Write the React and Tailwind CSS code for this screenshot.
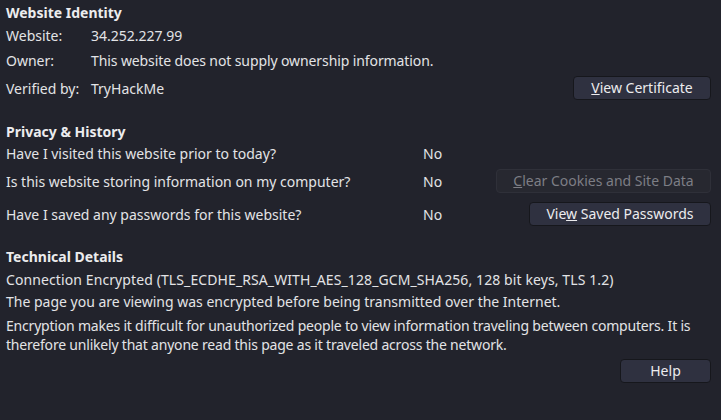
import React from 'react';

const Btn = ({ children, disabled, className = '' }) => (
    <button
        disabled={disabled}
        className={`h-[24px] rounded-[4px] border text-[14px] leading-none ${
            disabled
                ? 'border-[#2f3039] bg-[#272830] text-[#7d7e85]'
                : 'border-[#16171c] bg-[#2f3140] text-[#ececee]'
        } ${className}`}
    >
        {children}
    </button>
);

const Heading = ({ children, className = '' }) => (
    <div className={`text-[14px] font-bold text-[#ececee] leading-[19px] ${className}`}>{children}</div>
);

export default function App() {
    return (
        <div
            className="w-[721px] h-[420px] bg-[#22232c] text-[#e3e3e6] text-[14px] px-[6px] overflow-hidden"
            style={{ fontFamily: '"Noto Sans", "Open Sans", sans-serif' }}
        >
            {/* Website Identity */}
            <Heading className="pt-[3px]">Website Identity</Heading>
            <div className="flex items-center h-[24px] mt-[1px]">
                <span className="w-[85px]">Website:</span>
                <span>34.252.227.99</span>
            </div>
            <div className="flex items-center h-[24px] mt-[1px]">
                <span className="w-[85px]">Owner:</span>
                <span className="tracking-[-0.1px]">This website does not supply ownership information.</span>
            </div>
            <div className="flex items-center h-[28px] mt-[2px]">
                <span className="w-[85px]">Verified by:</span>
                <span className="flex-1">TryHackMe</span>
                <Btn className="w-[138px] mr-[4px]"><u>V</u>iew Certificate</Btn>
            </div>

            {/* Privacy & History */}
            <Heading className="mt-[20px]">Privacy &amp; History</Heading>
            <div className="flex items-center h-[24px]">
                <span className="w-[417px]">Have I visited this website prior to today?</span>
                <span>No</span>
            </div>
            <div className="flex items-center h-[26px] mt-[3px]">
                <span className="w-[417px]">Is this website storing information on my computer?</span>
                <span className="flex-1">No</span>
                <Btn disabled className="w-[215px] mr-[4px]"><u>C</u>lear Cookies and Site Data</Btn>
            </div>
            <div className="flex items-center h-[26px] mt-[7px]">
                <span className="w-[417px]">Have I saved any passwords for this website?</span>
                <span className="flex-1">No</span>
                <Btn className="w-[182px] mr-[4px]">Vie<u>w</u> Saved Passwords</Btn>
            </div>

            {/* Technical Details */}
            <Heading className="mt-[20px]">Technical Details</Heading>
            <div className="leading-[19px] mt-[4px] tracking-[0.1px]">
                Connection Encrypted (TLS_ECDHE_RSA_WITH_AES_128_GCM_SHA256, 128 bit keys, TLS 1.2)
            </div>
            <div className="leading-[19px] mt-[3px]">
                The page you are viewing was encrypted before being transmitted over the Internet.
            </div>
            <div className="leading-[19px] mt-[5px] tracking-[-0.2px]">
                Encryption makes it difficult for unauthorized people to view information traveling between computers. It is therefore unlikely that anyone read this page as it traveled across the network.
            </div>
            <div className="flex justify-end mt-[5px] pr-[4px]">
                <Btn className="w-[91px]">Help</Btn>
            </div>
        </div>
    );
}
